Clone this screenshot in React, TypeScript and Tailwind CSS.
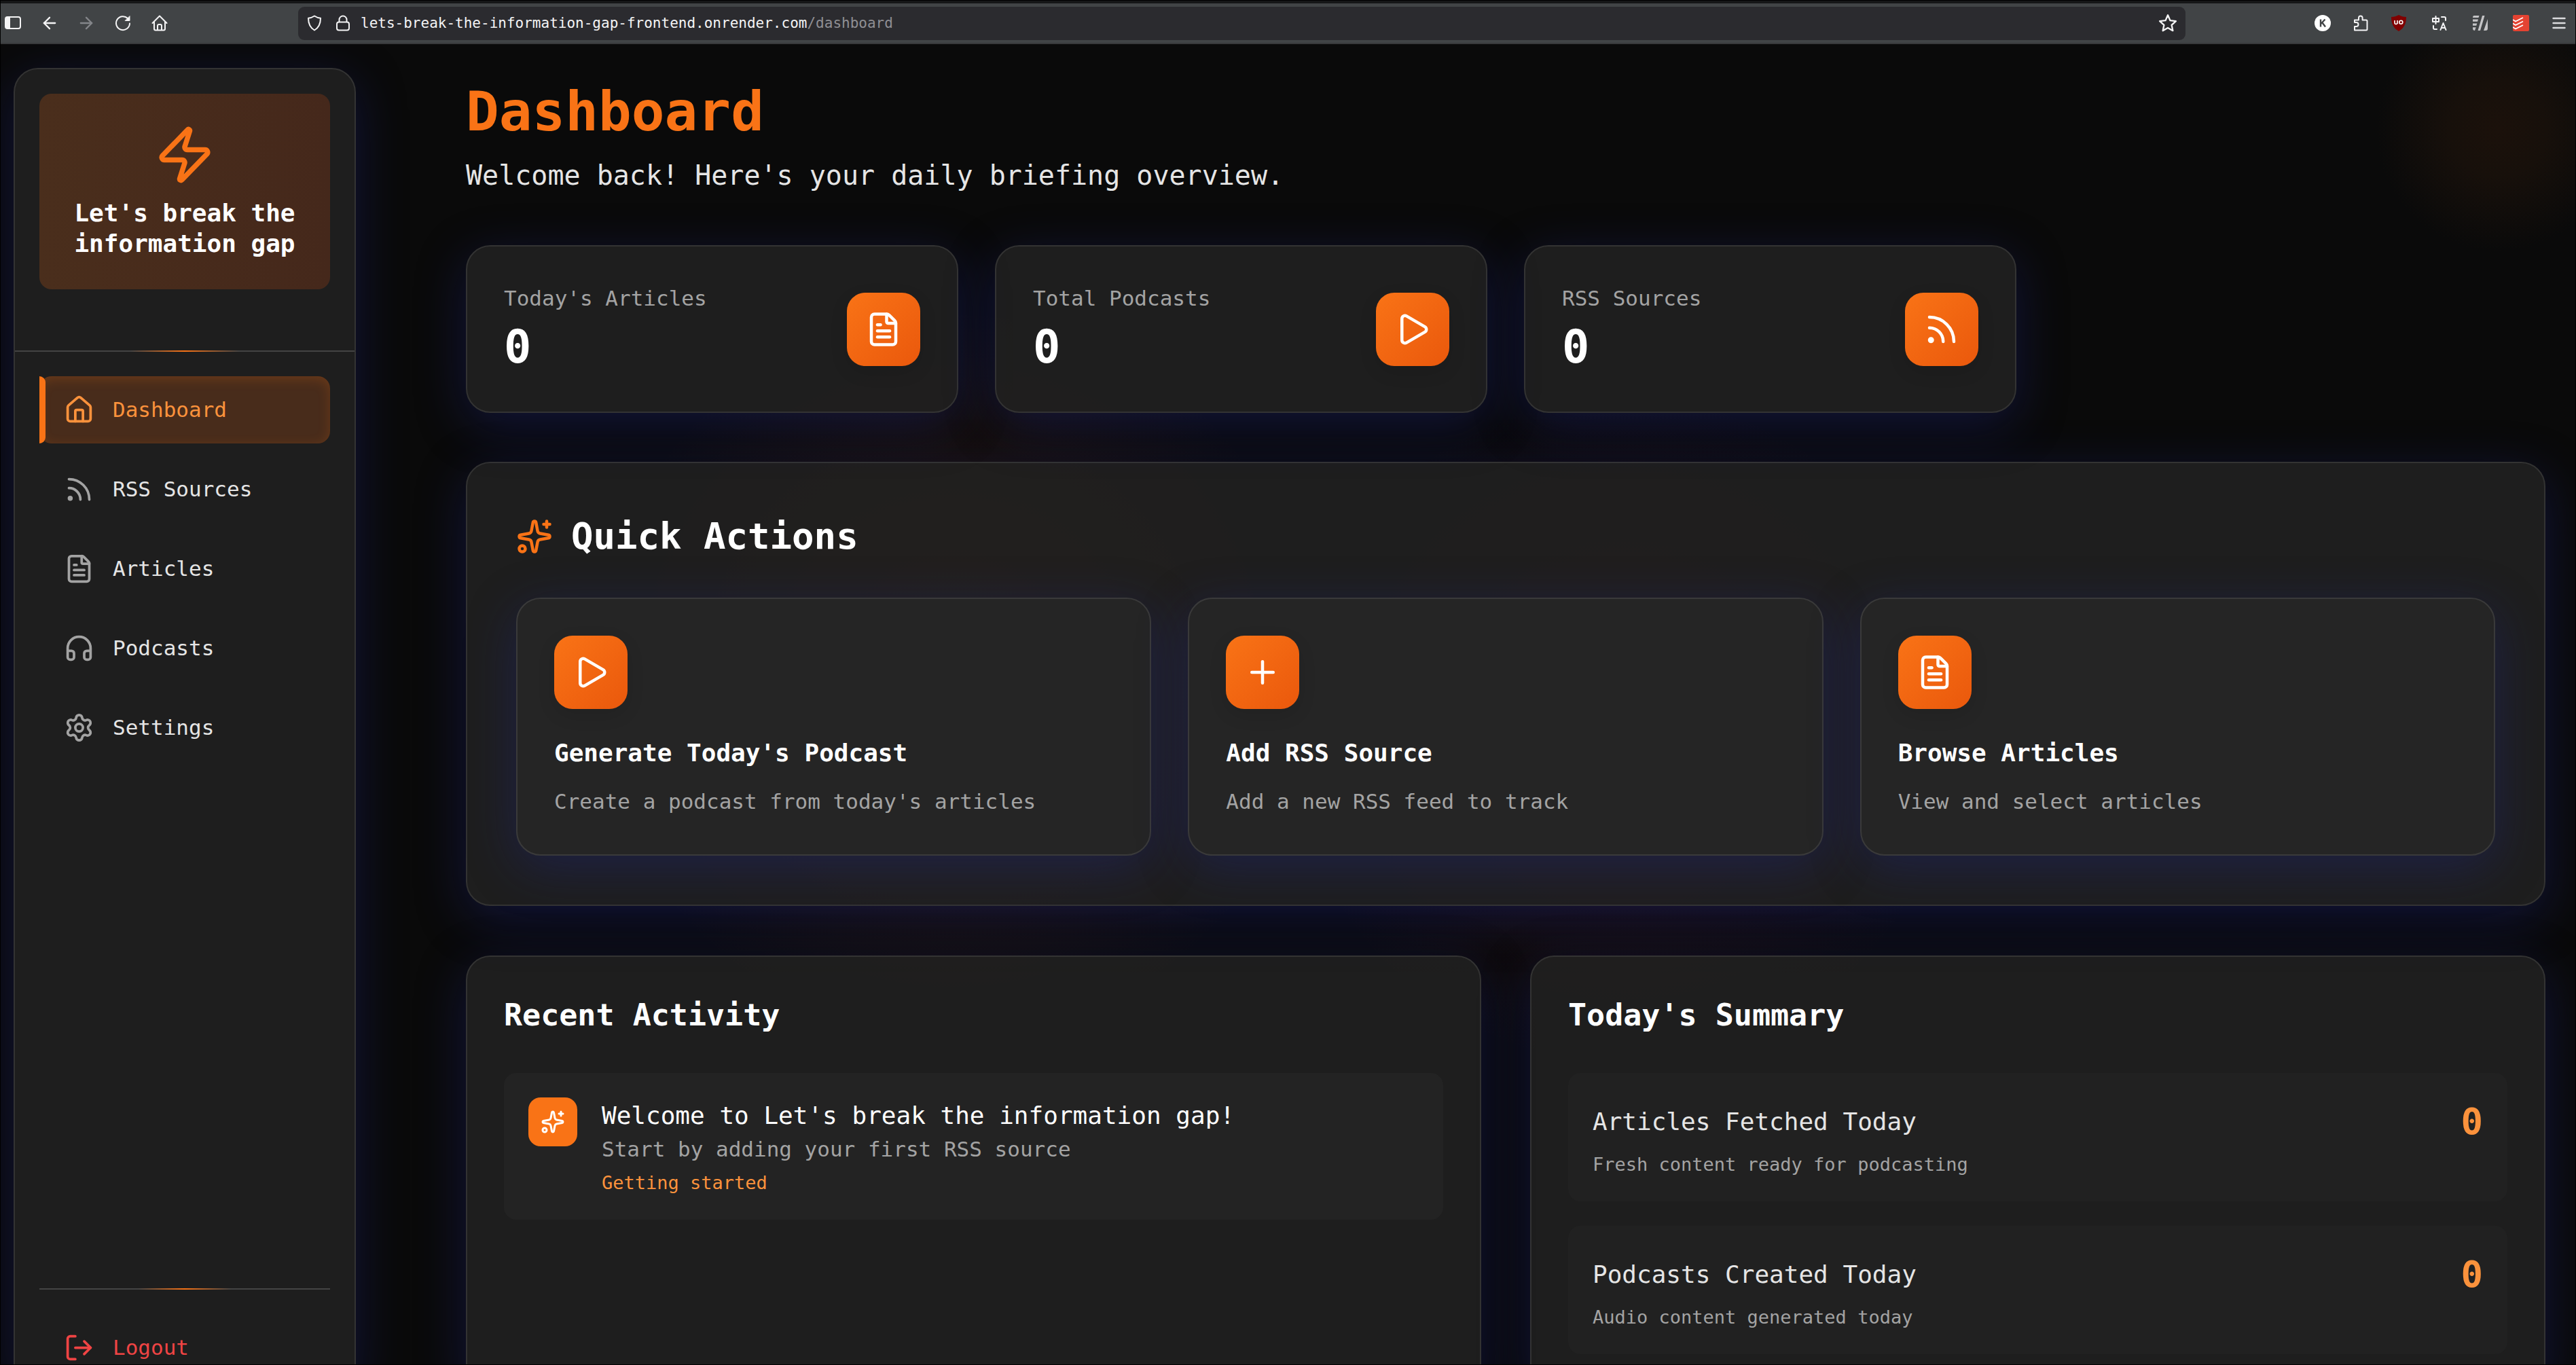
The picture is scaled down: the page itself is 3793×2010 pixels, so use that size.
import React from "react";
import {
  ArrowLeft,
  ArrowRight,
  FileText,
  Headphones,
  House,
  LogOut,
  Play,
  Plus,
  Rss,
  Settings,
  Sparkles,
  Zap,
  type LucideIcon,
} from "lucide-react";

const nav: { label: string; icon: LucideIcon; active?: boolean }[] = [
  { label: "Dashboard", icon: House, active: true },
  { label: "RSS Sources", icon: Rss },
  { label: "Articles", icon: FileText },
  { label: "Podcasts", icon: Headphones },
  { label: "Settings", icon: Settings },
];

const stats: { label: string; value: number; icon: LucideIcon }[] = [
  { label: "Today's Articles", value: 0, icon: FileText },
  { label: "Total Podcasts", value: 0, icon: Play },
  { label: "RSS Sources", value: 0, icon: Rss },
];

const actions: { title: string; text: string; icon: LucideIcon }[] = [
  { title: "Generate Today's Podcast", text: "Create a podcast from today's articles", icon: Play },
  { title: "Add RSS Source", text: "Add a new RSS feed to track", icon: Plus },
  { title: "Browse Articles", text: "View and select articles", icon: FileText },
];

const summary = [
  { title: "Articles Fetched Today", text: "Fresh content ready for podcasting", value: 0 },
  { title: "Podcasts Created Today", text: "Audio content generated today", value: 0 },
];

const glass =
  "rounded-[36px] border-2 border-[#333333] bg-[rgba(35,35,35,0.8)] shadow-[0_18px_72px_rgba(31,38,135,0.37)]";

function IconTile({ icon: Icon }: { icon: LucideIcon }) {
  return (
    <span className="flex size-[108px] shrink-0 items-center justify-center rounded-[27px] bg-linear-to-br from-[#f97316] to-[#ea580c] text-white shadow-[0_9px_27px_rgba(0,0,0,0.1)]">
      <Icon className="size-[54px]" />
    </span>
  );
}

function Glyph({ children, box = "0 0 24 24", className = "size-6" }: { children: React.ReactNode; box?: string; className?: string }) {
  return (
    <svg
      viewBox={box}
      className={className}
      fill="none"
      stroke="currentColor"
      strokeWidth="2"
      strokeLinecap="round"
      strokeLinejoin="round"
      aria-hidden="true"
    >
      {children}
    </svg>
  );
}

function BarButton({ label, className = "", children }: { label: string; className?: string; children: React.ReactNode }) {
  return (
    <button type="button" aria-label={label} className={`flex size-6 items-center justify-center ${className}`}>
      {children}
    </button>
  );
}

function BrowserBar() {
  return (
    <header className="flex h-16 shrink-0 items-center border-t-4 border-b-2 border-t-[#151617] border-b-[#38393b] bg-[#414446] pr-1 pl-[6px] text-[#f4f4f5]">
      <div className="flex items-center gap-[30px]">
        <BarButton label="Sidebar">
          <Glyph>
            <rect x="1" y="3" width="22" height="17" rx="3" />
            <path d="M2 4h5v15H2z" fill="currentColor" />
          </Glyph>
        </BarButton>
        <BarButton label="Back">
          <ArrowLeft className="size-7 shrink-0" strokeWidth={2} />
        </BarButton>
        <BarButton label="Forward" className="text-[#84868a]">
          <ArrowRight className="size-7 shrink-0" strokeWidth={2} />
        </BarButton>
        <BarButton label="Reload">
          <Glyph>
            <path d="M22 12.500A10 10 0 1 1 19 5" />
            <path d="M22 2v6.500h-6.500z" fill="currentColor" strokeWidth="1" />
          </Glyph>
        </BarButton>
        <BarButton label="Home">
          <Glyph>
            <path d="M1.500 12 12 1.500 22.500 12" />
            <path d="M4 10v10.500a2 2 0 0 0 2 2h12a2 2 0 0 0 2-2V10" />
            <path d="M9 22v-6a2 2 0 0 1 2-2h2a2 2 0 0 1 2 2v6" />
          </Glyph>
        </BarButton>
      </div>

      <div className="ml-48 flex h-[49px] flex-1 items-center rounded-[9px] bg-[#2b2b2f] px-3">
        <Glyph>
          <path d="M12 1.500c3 2 6 3 9 3.300 0 8-2.500 14-9 17.700C5.500 18.800 3 12.800 3 4.800c3-.3 6-1.300 9-3.300z" />
        </Glyph>
        <Glyph className="ml-[18px] size-6">
          <rect x="3" y="10.500" width="18" height="12" rx="3" />
          <path d="M6.500 10V7a5.500 5.500 0 0 1 11 0v3" />
        </Glyph>
        <div role="textbox" aria-label="Address" className="ml-[14px] flex-1 text-[21px] leading-7">
          lets-break-the-information-gap-frontend.onrender.com<span className="text-[#8f8f94]">/dashboard</span>
        </div>
        <BarButton label="Bookmark" className="size-7">
          <Glyph className="size-7">
            <path d="m12 2 3 6.700 7.200.8-5.400 4.900 1.500 7.200-6.300-3.700-6.300 3.700 1.500-7.200L1.800 9.500 9 8.700z" />
          </Glyph>
        </BarButton>
      </div>

      <div className="ml-[190px] mr-2 flex items-center gap-9">
        <BarButton label="Account">
          <svg viewBox="0 0 24 24" className="size-6" aria-hidden="true">
            <circle cx="12" cy="12" r="12" fill="#ffffff" />
            <path d="M9 6.500v11M15.500 6.500 9.500 13M11.500 11.500l4.500 6" stroke="#414446" strokeWidth="2.400" fill="none" />
          </svg>
        </BarButton>
        <BarButton label="Extensions" className="-ml-1">
          <Glyph>
            <path d="M3 22.500V17h2.500a3 3 0 0 0 0-6H3V7.500h6V4.300a2.800 2.800 0 0 1 5.600 0v3.200H20a1.500 1.500 0 0 1 1.500 1.500v12a1.500 1.500 0 0 1-1.500 1.500z" />
          </Glyph>
        </BarButton>
        <BarButton label="Content blocker" className="-ml-1">
          <svg viewBox="0 0 24 24" className="size-6" aria-hidden="true">
            <path d="M12 0c3.500 2 7 2.800 11 3 0 9-2.500 16-11 21C3.500 19 1 12 1 3c4-.2 7.500-1 11-3z" fill="#800000" />
            <path d="M6 8v3.500a2 2 0 0 0 4 0V8M10 8v5" stroke="#fff" strokeWidth="1.600" fill="none" />
            <circle cx="15.300" cy="10.700" r="2.500" stroke="#fff" strokeWidth="1.600" fill="none" />
          </svg>
        </BarButton>
        <BarButton label="Translate">
          <Glyph>
            <path d="M2 5h9v5H2zM6.500 2v11M15 3h4a2 2 0 0 1 2 2v3M3 16v3a2 2 0 0 0 2 2h3M13.500 22 17.500 12l4 10M15 19h5" />
          </Glyph>
        </BarButton>
        <BarButton label="Notes" className="text-[#c4c4c6]">
          <svg viewBox="0 0 24 24" className="size-6" fill="currentColor" aria-hidden="true">
            <path d="M3 1h7.500L9.500 4H1c0-1.700.8-3 2-3zM1 6.500h8l-1 3.300H1zM1 12.500h6.300l-1 3.200H1zM1 18.200h4.700L4 23c-1.800 0-3-1.200-3-3zM15 1h3.500L12 23H8.500zM23 6v14a3 3 0 0 1-3 3h-3z" />
          </svg>
        </BarButton>
        <BarButton label="Tasks">
          <svg viewBox="0 0 24 24" className="size-6" aria-hidden="true">
            <rect width="24" height="24" rx="2" fill="#e44332" />
            <path d="m0 7 4 2.500L15 4M0 12.500 4 15l11-5.500M0 18l4 2.500L15 15" stroke="#fff" strokeWidth="1.800" fill="none" />
          </svg>
        </BarButton>
        <BarButton label="Menu" className="-ml-1 text-[#dcdcde]">
          <Glyph>
            <path d="M3.500 5h17M3.500 12h17M3.500 19h17" strokeWidth="2.400" />
          </Glyph>
        </BarButton>
      </div>
    </header>
  );
}

function Divider() {
  return (
    <div className="h-[2px] bg-[linear-gradient(90deg,#444444_34%,#f97316_50%,#444444_66%)]" />
  );
}

function Sidebar() {
  return (
    <aside className={`mt-[35px] ml-[19px] flex h-full w-[504px] shrink-0 flex-col ${glass}`}>
      <div className="px-9 pt-9 pb-[90px]">
        <div className="flex flex-col items-center gap-[18px] rounded-[18px] bg-linear-to-r from-[#4a2e1c] to-[#45281b] px-9 py-[45px]">
          <Zap className="size-[90px] text-[#f97316]" />
          <p className="w-min min-w-[340px] text-center text-[36px] leading-[45px] font-bold text-white">
            Let's break the information gap
          </p>
        </div>
      </div>
      <Divider />
      <nav className="flex flex-col gap-[18px] px-9 pt-9">
        {nav.map(({ label, icon: Icon, active }) => (
          <a
            key={label}
            href="#"
            aria-current={active ? "page" : undefined}
            className={`relative flex h-[99px] items-center gap-[27px] rounded-[18px] px-9 text-[31px] leading-[45px] ${
              active
                ? "bg-[#482c1b] text-[#fb923c] shadow-[inset_0_4px_18px_rgba(249,115,22,0.2)]"
                : "text-[#e5e5e5]"
            }`}
          >
            {active && <span className="absolute inset-y-0 left-0 w-[9px] rounded-r-[9px] bg-[#f97316]" />}
            <Icon className={active ? "size-[45px]" : "size-[45px] text-[#a3a3a3]"} />
            {label}
          </a>
        ))}
      </nav>
      <div className="mt-auto px-9 pb-2">
        <Divider />
        <button
          type="button"
          className="mt-9 flex h-[99px] w-full items-center gap-[27px] rounded-[18px] px-9 text-[31px] leading-[45px] text-[#ef4444]"
        >
          <LogOut className="size-[45px]" />
          Logout
        </button>
      </div>
    </aside>
  );
}

export default function App() {
  return (
    <div className="flex h-screen flex-col overflow-hidden border border-black bg-[#0a0a0a] font-['DejaVu_Sans_Mono',monospace] text-white">
      <BrowserBar />
      <div className="flex min-h-0 flex-1 overflow-hidden bg-[radial-gradient(circle_180px_at_97%_125px,#1b110b_0%,#17100b_40%,transparent_100%),radial-gradient(circle_540px_at_37%_930px,rgba(249,115,22,0.12)_0%,transparent_100%),radial-gradient(circle_500px_at_63%_1010px,rgba(239,68,68,0.09)_0%,transparent_100%)]">
        <Sidebar />
        <main className="min-w-0 flex-1 pt-[54px] pr-[44px] pl-[162px]">
          <h1 className="text-[81px] leading-[90px] font-bold text-[#f97316]">Dashboard</h1>
          <p className="mt-[18px] text-[40px] leading-[63px] text-[#e5e5e5]">
            Welcome back! Here's your daily briefing overview.
          </p>

          <section className="mt-[71px] grid grid-cols-4 gap-[54px]">
            {stats.map(({ label, value, icon }) => (
              <div key={label} className={`flex items-center justify-between p-[54px] ${glass}`}>
                <div className="flex flex-col gap-[9px]">
                  <span className="text-[31px] leading-[45px] text-[#a3a3a3]">{label}</span>
                  <span className="text-[67px] leading-[81px] font-bold">{value}</span>
                </div>
                <IconTile icon={icon} />
              </div>
            ))}
          </section>

          <section className={`mt-[72px] p-[72px] ${glass}`}>
            <h2 className="flex items-center gap-[27px] text-[54px] leading-[72px] font-bold">
              <Sparkles className="size-[54px] text-[#f97316]" />
              Quick Actions
            </h2>
            <div className="mt-[54px] grid grid-cols-3 gap-[54px]">
              {actions.map(({ title, text, icon }) => (
                <button
                  key={title}
                  type="button"
                  className="flex flex-col items-start rounded-[36px] border-2 border-[#3a3a3a] bg-[#252525] p-[54px] text-left shadow-[0_18px_72px_rgba(31,38,135,0.37)]"
                >
                  <IconTile icon={icon} />
                  <span className="mt-9 text-[36px] leading-[58px] font-bold">{title}</span>
                  <span className="mt-[18px] text-[31px] leading-[48px] text-[#a3a3a3]">{text}</span>
                </button>
              ))}
            </div>
          </section>

          <div className="mt-[73px] grid grid-cols-2 gap-[72px]">
            <section className={`p-[54px] ${glass}`}>
              <h2 className="text-[45px] leading-[63px] font-bold">Recent Activity</h2>
              <div className="mt-[54px] flex items-start gap-9 rounded-[18px] bg-[#232323] p-9">
                <span className="flex size-[72px] shrink-0 items-center justify-center rounded-[18px] bg-[#f97316]">
                  <Sparkles className="size-9" />
                </span>
                <div>
                  <p className="text-[36px] leading-[54px]">Welcome to Let's break the information gap!</p>
                  <p className="text-[31px] leading-[45px] text-[#a3a3a3]">Start by adding your first RSS source</p>
                  <p className="mt-[9px] text-[27px] leading-9 text-[#fb923c]">Getting started</p>
                </div>
              </div>
            </section>

            <section className={`p-[54px] ${glass}`}>
              <h2 className="text-[45px] leading-[63px] font-bold">Today's Summary</h2>
              <div className="mt-[54px] flex flex-col gap-9">
                {summary.map(({ title, text, value }) => (
                  <div key={title} className="rounded-[18px] bg-[#212121] p-9">
                    <div className="flex items-center justify-between leading-[72px]">
                      <span className="text-[36px] text-[#e5e5e5]">{title}</span>
                      <span className="text-[54px] font-bold text-[#fb923c]">{value}</span>
                    </div>
                    <p className="mt-[9px] text-[27px] leading-9 text-[#a3a3a3]">{text}</p>
                  </div>
                ))}
              </div>
            </section>
          </div>
        </main>
      </div>
    </div>
  );
}
